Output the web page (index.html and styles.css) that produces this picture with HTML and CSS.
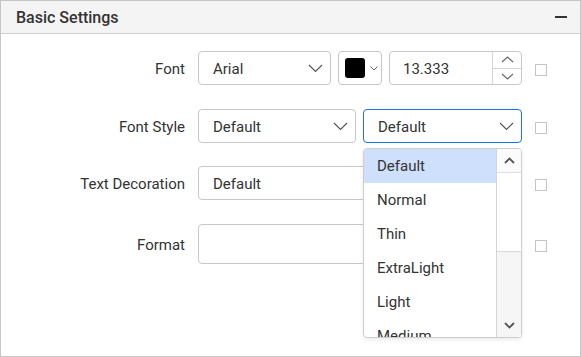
FILE: index.html
```html
<!DOCTYPE html>
<html lang="en">
<head>
  <meta charset="UTF-8" />
  <title>Basic Settings</title>
  <link rel="stylesheet" href="styles.css">
</head>
<body>
  <div class="panel">
    <div class="panel-header">
      <span class="panel-title">Basic Settings</span>
      <span class="collapse"></span>
    </div>
    <div class="panel-body">

      <div class="row">
        <label class="label">Font</label>
        <div class="controls">
          <div class="select w-font">
            <span class="value">Arial</span>
            <svg class="chev" width="15" height="9" viewBox="0 0 15 9"><path d="M1 1l6.5 6.5L14 1" fill="none" stroke="#555" stroke-width="1.2"/></svg>
          </div>
          <div class="color-pick">
            <span class="swatch"></span>
            <svg width="8" height="5" viewBox="0 0 8 5"><path d="M0.5 0.5l3.5 3.5 3.5-3.5" fill="none" stroke="#666" stroke-width="1"/></svg>
          </div>
          <div class="numeric">
            <span class="value">13.333</span>
            <div class="spin">
              <span class="spin-btn"><svg width="13" height="7" viewBox="0 0 13 7"><path d="M1 6l5.5-5 5.5 5" fill="none" stroke="#666" stroke-width="1.1"/></svg></span>
              <span class="spin-btn"><svg width="13" height="7" viewBox="0 0 13 7"><path d="M1 1l5.5 5 5.5-5" fill="none" stroke="#666" stroke-width="1.1"/></svg></span>
            </div>
          </div>
        </div>
        <span class="check"></span>
      </div>

      <div class="row">
        <label class="label">Font Style</label>
        <div class="controls">
          <div class="select w-style">
            <span class="value">Default</span>
            <svg class="chev" width="15" height="9" viewBox="0 0 15 9"><path d="M1 1l6.5 6.5L14 1" fill="none" stroke="#555" stroke-width="1.2"/></svg>
          </div>
          <div class="select-wrap">
            <div class="select focused">
              <span class="value">Default</span>
              <svg class="chev" width="15" height="9" viewBox="0 0 15 9"><path d="M1 1l6.5 6.5L14 1" fill="none" stroke="#555" stroke-width="1.2"/></svg>
            </div>
            <div class="popup">
              <ul class="options">
                <li class="selected">Default</li>
                <li>Normal</li>
                <li>Thin</li>
                <li>ExtraLight</li>
                <li>Light</li>
                <li>Medium</li>
              </ul>
              <div class="scrollbar">
                <span class="sb-btn up"><svg width="11" height="7" viewBox="0 0 11 7"><path d="M1 6l4.5-4.5L10 6" fill="none" stroke="#555" stroke-width="1.8"/></svg></span>
                <span class="sb-thumb"></span>
                <span class="sb-track"></span>
                <span class="sb-btn down"><svg width="11" height="7" viewBox="0 0 11 7"><path d="M1 1l4.5 4.5L10 1" fill="none" stroke="#555" stroke-width="1.8"/></svg></span>
              </div>
            </div>
          </div>
        </div>
        <span class="check"></span>
      </div>

      <div class="row">
        <label class="label">Text Decoration</label>
        <div class="controls">
          <div class="select w-full">
            <span class="value">Default</span>
          </div>
        </div>
        <span class="check"></span>
      </div>

      <div class="row">
        <label class="label">Format</label>
        <div class="controls">
          <div class="textbox"></div>
        </div>
        <span class="check"></span>
      </div>

    </div>
  </div>
</body>
</html>
```

FILE: styles.css
```css
* { box-sizing: border-box; }
body, html {
  margin: 0; padding: 0; background: #fff;
  font-family: Roboto, 'Liberation Sans', sans-serif; color: #333;
}
.panel {
  width: 581px; height: 357px;
  border: 1px solid #c6c6c6; background: #fff;
}
.panel-header {
  display: flex; align-items: center; justify-content: space-between;
  height: 33px; padding: 0 13px 0 15px;
  background: #f4f4f4; border-bottom: 1px solid #d0d0d0;
}
.panel-title { font-size: 16px; font-weight: 500; color: #333; }
.collapse { width: 12px; height: 2px; background: #333; }
.panel-body {
  display: flex; flex-direction: column; gap: 24px;
  padding-top: 17px;
}
.row {
  display: grid; grid-template-columns: 184px 324px 12px;
  column-gap: 13px; align-items: center;
}
.row:nth-child(3) { margin-top: -1px; }
.label { text-align: right; font-size: 15px; color: #333; padding-top: 2px; }
.controls { display: flex; gap: 7px; }
.select, .numeric, .color-pick, .textbox {
  height: 34px; border: 1px solid #c8c8c8; border-radius: 4px;
  background: #fff; font-size: 15px; color: #333;
}
.value { padding-top: 1px; }
.select {
  display: flex; align-items: center; justify-content: space-between;
  padding: 0 7px 0 14px;
}
.select .chev { margin-top: 1px; }
.select.focused { border-color: #1a73e8; }
.w-font { width: 133px; }
.w-style { width: 158px; }
.w-full { width: 324px; }
.select-wrap { position: relative; width: 159px; }
.color-pick {
  width: 44px; display: flex; align-items: center; gap: 5px;
  padding-left: 6px;
}
.swatch { width: 20px; height: 20px; background: #000; border-radius: 3px; }
.numeric {
  width: 133px; display: flex; align-items: center;
  padding-left: 13px; overflow: hidden;
}
.numeric .value { flex: 1; }
.spin {
  width: 29px; height: 100%; display: flex; flex-direction: column;
  border-left: 1px solid #d6d6d6;
}
.spin-btn {
  flex: 1; display: flex; align-items: center; justify-content: center;
}
.spin-btn:first-child { border-bottom: 1px solid #d6d6d6; }
.textbox { height: 40px; width: 324px; }
.check {
  width: 12px; height: 12px; margin-top: 3px;
  border: 1px solid #c4c4c4; background: #fff;
}

/* dropdown list */
.popup {
  position: absolute; top: 39px; left: 0; z-index: 2;
  width: 159px; height: 190px; display: flex;
  background: #fff; border: 1px solid #cdcdcd; border-radius: 4px;
  box-shadow: 0 2px 4px rgba(0, 0, 0, 0.08); overflow: hidden;
}
.options {
  list-style: none; margin: 0; padding: 0; flex: 1; overflow: hidden;
}
.options li {
  height: 34px; line-height: 34px; padding-left: 13px;
  font-size: 15px; color: #333; white-space: nowrap;
}
.options li.selected { background: #cfe0fc; }
.scrollbar {
  width: 25px; display: flex; flex-direction: column;
  border-left: 1px solid #d4d4d4; background: #f6f6f6;
}
.sb-btn {
  height: 24px; display: flex; align-items: center; justify-content: center;
  background: #fbfbfb;
}
.sb-btn.up { border-bottom: 1px solid #e0e0e0; }
.sb-thumb { height: 79px; background: #fff; border-bottom: 1px solid #d8d8d8; }
.sb-track { flex: 1; background: #f6f6f6; }
.sb-btn.down { background: #f6f6f6; }
```
